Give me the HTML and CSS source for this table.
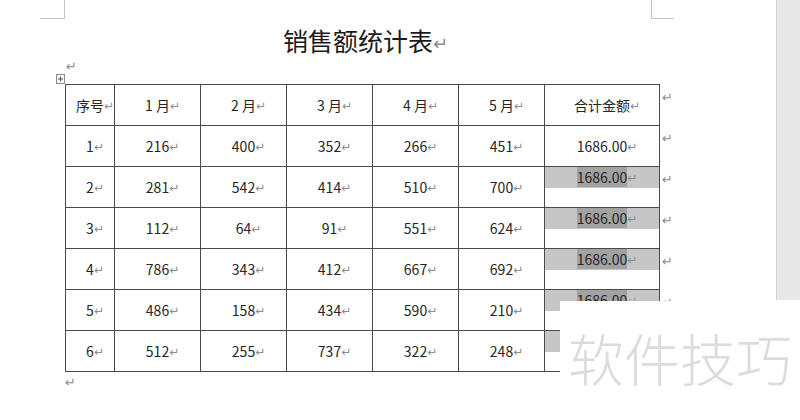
FILE: index.html
```html
<!DOCTYPE html>
<html lang="zh">
<head>
<meta charset="utf-8">
<title>销售额统计表</title>
<link rel="stylesheet" href="styles.css">
</head>
<body>
<div class="app">
  <div class="doc">
    <div class="corners">
      <div class="corner-l"></div>
      <div class="corner-r"></div>
    </div>
    <div class="content">
      <div class="title">销售额统计表<span class="pm pm-big">↵</span></div>
      <div class="pre">
        <svg class="handle" width="9" height="10" viewBox="0 0 9 10"><rect x="0.5" y="0.5" width="8" height="9" fill="#f4f4f4" stroke="#8c8c8c"/><path d="M4.5 2.5v5M2 5h5" stroke="#555" stroke-width="1"/></svg>
        <span class="pm-line">↵</span>
      </div>
      <table class="sheet">
        <colgroup>
          <col class="w1"><col class="w2"><col class="w2"><col class="w2"><col class="w2"><col class="w2"><col class="w3"><col class="w4">
        </colgroup>
        <tr>
          <td class="c">序号<span class="pm">↵</span></td>
          <td class="c">1 月<span class="pm">↵</span></td>
          <td class="c">2 月<span class="pm">↵</span></td>
          <td class="c">3 月<span class="pm">↵</span></td>
          <td class="c">4 月<span class="pm">↵</span></td>
          <td class="c">5 月<span class="pm">↵</span></td>
          <td class="c">合计金额<span class="pm">↵</span></td>
          <td class="rm"><span class="pm-row">↵</span></td>
        </tr>
        <tr>
          <td class="c">1<span class="pm">↵</span></td>
          <td class="c">216<span class="pm">↵</span></td>
          <td class="c">400<span class="pm">↵</span></td>
          <td class="c">352<span class="pm">↵</span></td>
          <td class="c">266<span class="pm">↵</span></td>
          <td class="c">451<span class="pm">↵</span></td>
          <td class="c">1686.00<span class="pm">↵</span></td>
          <td class="rm"><span class="pm-row">↵</span></td>
        </tr>
        <tr>
          <td class="c">2<span class="pm">↵</span></td>
          <td class="c">281<span class="pm">↵</span></td>
          <td class="c">542<span class="pm">↵</span></td>
          <td class="c">414<span class="pm">↵</span></td>
          <td class="c">510<span class="pm">↵</span></td>
          <td class="c">700<span class="pm">↵</span></td>
          <td class="c hl"><div class="band"><span class="sel">1686.00</span><span class="pm">↵</span></div></td>
          <td class="rm"><span class="pm-row">↵</span></td>
        </tr>
        <tr>
          <td class="c">3<span class="pm">↵</span></td>
          <td class="c">112<span class="pm">↵</span></td>
          <td class="c">64<span class="pm">↵</span></td>
          <td class="c">91<span class="pm">↵</span></td>
          <td class="c">551<span class="pm">↵</span></td>
          <td class="c">624<span class="pm">↵</span></td>
          <td class="c hl"><div class="band"><span class="sel">1686.00</span><span class="pm">↵</span></div></td>
          <td class="rm"><span class="pm-row">↵</span></td>
        </tr>
        <tr>
          <td class="c">4<span class="pm">↵</span></td>
          <td class="c">786<span class="pm">↵</span></td>
          <td class="c">343<span class="pm">↵</span></td>
          <td class="c">412<span class="pm">↵</span></td>
          <td class="c">667<span class="pm">↵</span></td>
          <td class="c">692<span class="pm">↵</span></td>
          <td class="c hl"><div class="band"><span class="sel">1686.00</span><span class="pm">↵</span></div></td>
          <td class="rm"><span class="pm-row">↵</span></td>
        </tr>
        <tr>
          <td class="c">5<span class="pm">↵</span></td>
          <td class="c">486<span class="pm">↵</span></td>
          <td class="c">158<span class="pm">↵</span></td>
          <td class="c">434<span class="pm">↵</span></td>
          <td class="c">590<span class="pm">↵</span></td>
          <td class="c">210<span class="pm">↵</span></td>
          <td class="c hl"><div class="band"><span class="sel">1686.00</span><span class="pm">↵</span></div></td>
          <td class="rm"><span class="pm-row">↵</span></td>
        </tr>
        <tr>
          <td class="c">6<span class="pm">↵</span></td>
          <td class="c">512<span class="pm">↵</span></td>
          <td class="c">255<span class="pm">↵</span></td>
          <td class="c">737<span class="pm">↵</span></td>
          <td class="c">322<span class="pm">↵</span></td>
          <td class="c">248<span class="pm">↵</span></td>
          <td class="c hl"><div class="band band-hidden"></div></td>
          <td class="rm"></td>
        </tr>
      </table>
      <div class="post"><span class="pm-line">↵</span></div>
    </div>
  </div>
  <div class="side"></div>
  <div class="watermark">软件技巧</div>
</div>
</body>
</html>
```

FILE: styles.css
```css
html, body {
  margin: 0;
  padding: 0;
  background: #ffffff;
}
body {
  width: 800px;
  height: 420px;
  overflow: hidden;
  font-family: "Noto Sans CJK SC", "Noto Sans", sans-serif;
  color: #222222;
}
.app {
  position: relative;
  display: flex;
  width: 800px;
  height: 420px;
}
.doc {
  flex: 1;
  min-width: 0;
}
.side {
  width: 23px;
  height: 300px;
  background: #e8e8e8;
  border-left: 1px solid #d4d4d4;
}
.corners {
  display: flex;
  justify-content: space-between;
  margin-left: 40px;
  width: 634px;
}
.corner-l {
  width: 24px;
  height: 18px;
  border-right: 1px solid #c4c4c4;
  border-bottom: 1px solid #c4c4c4;
}
.corner-r {
  width: 22px;
  height: 18px;
  border-left: 1px solid #c4c4c4;
  border-bottom: 1px solid #c4c4c4;
}
.content {
  margin-left: 65px;
  width: 586px;
}
.title {
  margin-top: 6px;
  height: 30px;
  line-height: 30px;
  font-size: 25px;
  text-align: center;
  color: #1a1a1a;
}
.pm {
  display: inline-block;
  width: 0;
  white-space: nowrap;
  font-family: "DejaVu Sans", sans-serif;
  font-size: 12px;
  color: #8c8c8c;
  vertical-align: 1px;
}
.pm-big {
  font-size: 18px;
  vertical-align: 1px;
}
.pre {
  display: flex;
  align-items: flex-start;
  height: 29px;
  margin-left: -9px;
}
.handle {
  display: block;
  margin-top: 19px;
}
.pm-line {
  font-family: "DejaVu Sans", sans-serif;
  font-size: 13px;
  line-height: 13px;
  color: #8c8c8c;
  margin-top: 5px;
  margin-left: 1px;
}
.sheet {
  border-collapse: collapse;
  table-layout: fixed;
  width: 615px;
}
.w1 { width: 49px; }
.w2 { width: 86px; }
.w3 { width: 115px; }
.w4 { width: 20px; }
.sheet tr {
  height: 41px;
}
td.c {
  border: 1px solid #4a4a4a;
  padding: 0;
  height: 40px;
  text-align: center;
  vertical-align: middle;
  font-size: 14px;
  line-height: 20px;
  color: #262626;
  white-space: nowrap;
}
td.hl {
  vertical-align: top;
}
.band {
  height: 21px;
  line-height: 21px;
  background: #c6c6c6;
  text-align: center;
}
.sel {
  background: #a2a2a2;
}
td.rm {
  border: none;
  padding: 6px 0 0 2px;
  vertical-align: top;
}
.pm-row {
  display: block;
  font-family: "DejaVu Sans", sans-serif;
  font-size: 13px;
  line-height: 13px;
  color: #8c8c8c;
}
.post {
  height: 20px;
}
.post .pm-line {
  display: block;
  margin-top: 4px;
  margin-left: 0;
}
.watermark {
  position: absolute;
  left: 560px;
  top: 301px;
  width: 232px;
  height: 91px;
  padding: 28px 0 0 8px;
  background: #ffffff;
  font-size: 56px;
  line-height: 56px;
  font-weight: 300;
  color: #dcdcdc;
  white-space: nowrap;
}
```
